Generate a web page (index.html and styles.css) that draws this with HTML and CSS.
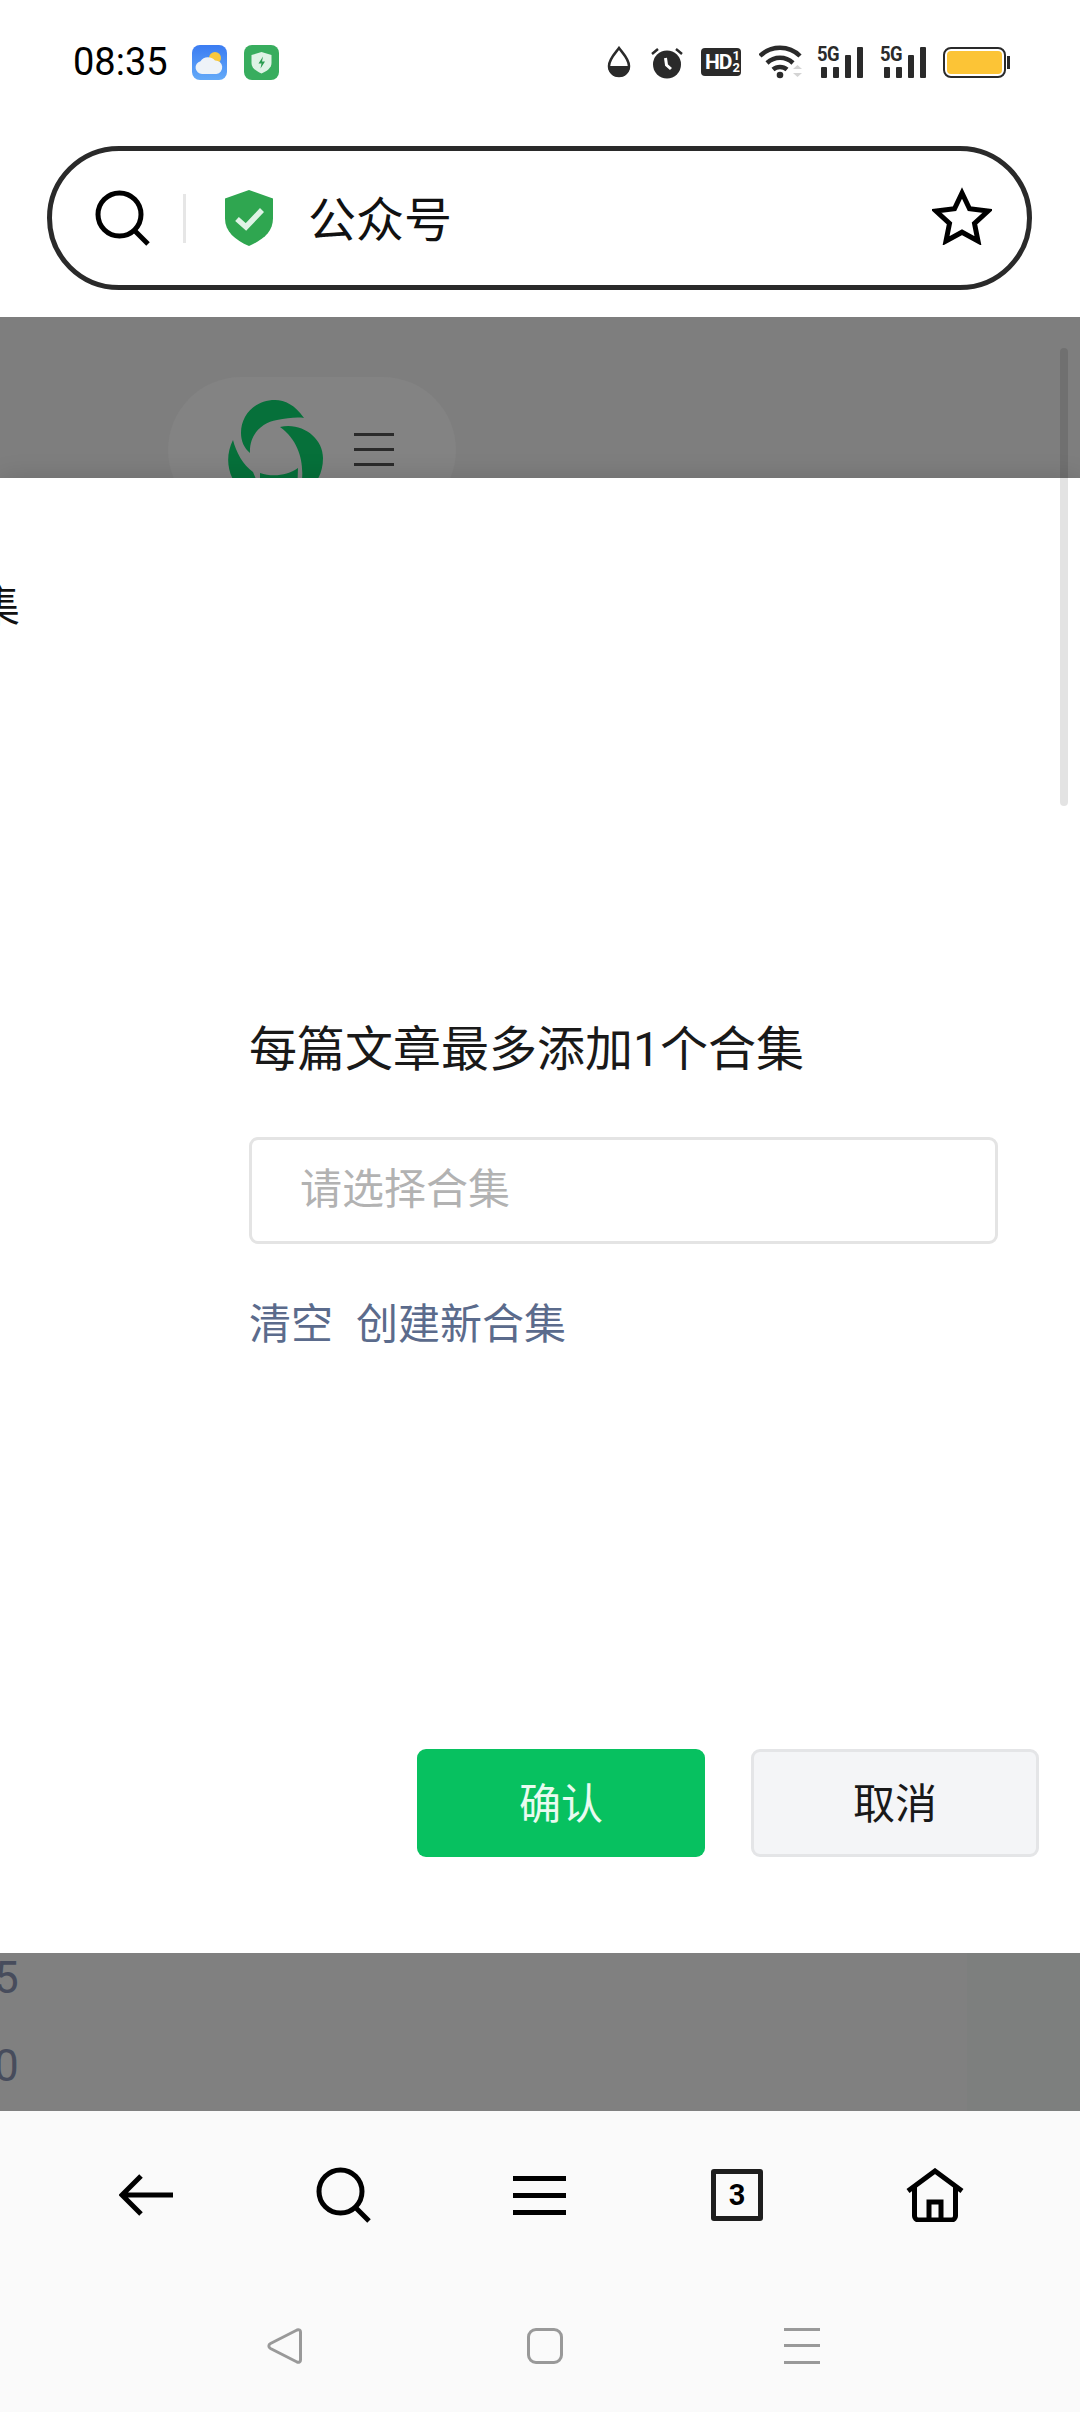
FILE: index.html
```html
<!DOCTYPE html>
<html lang="zh-CN">
<head>
    <meta charset="UTF-8">
    <meta name="viewport" content="width=device-width, initial-scale=1.0">
    <title>公众号</title>
    <link rel="stylesheet" href="styles.css">
</head>
<body>
    <div class="status-bar">
        <div class="status-left">
            <span class="time">08:35</span>
            <svg class="app-icon weather" viewBox="0 0 35 35">
                <defs>
                    <linearGradient id="sky" x1="0" y1="0" x2="0" y2="1">
                        <stop offset="0" stop-color="#3b7cf2"/>
                        <stop offset="1" stop-color="#64aaf8"/>
                    </linearGradient>
                </defs>
                <rect width="35" height="35" rx="8" fill="url(#sky)"/>
                <circle cx="23" cy="13" r="6" fill="#f8c83e"/>
                <path d="M10 29a6.500 6.500 0 0 1-1.500-12.800A9 9 0 0 1 23 15.500a6.800 6.800 0 0 1 1.500 13.500z" fill="#eef3f8"/>
            </svg>
            <svg class="app-icon" viewBox="0 0 35 35">
                <rect width="35" height="35" rx="8" fill="#38ad5e"/>
                <path d="M17.500 7l10 3v8c0 5-4.500 8-10 10.500-5.500-2.500-10-5.500-10-10.500v-8z" fill="#dff3e6"/>
                <path d="M19 11.500l-4.500 7h3l-1 5 4.500-7h-3z" fill="#2b9c50"/>
            </svg>
        </div>
        <div class="status-right">
            <svg class="st-drop" viewBox="0 0 24 32">
                <path d="M12 2c4 5.500 10 11 10 18a10 10 0 0 1-20 0c0-7 6-12.500 10-18z" fill="none" stroke="#2a2a2a" stroke-width="2.500"/>
                <path d="M1 20h22a11 11 0 0 1-22 0z" fill="#2a2a2a"/>
            </svg>
            <svg class="st-alarm" viewBox="0 0 32 33">
                <circle cx="16" cy="18.500" r="14" fill="#2a2a2a"/>
                <path d="M1 8l6-5M31 8l-6-5" stroke="#2a2a2a" stroke-width="2.500" fill="none"/>
                <path d="M14.500 12l1 7 4.500 4" stroke="#fff" stroke-width="3" fill="none"/>
            </svg>
            <div class="st-hd"><span class="hd-main">HD</span><span class="hd-frac"><i>1</i><i>2</i></span></div>
            <svg class="st-wifi" viewBox="0 0 43 34">
                <path d="M1 11c11-11 29-11 40 0M8 18c7.500-7 18.500-7 26 0M14 24.500c4-3.500 10-3.500 14 0" fill="none" stroke="#2a2a2a" stroke-width="4.500"/>
                <circle cx="21" cy="30" r="3.300" fill="#2a2a2a"/>
                <path d="M34 24l4.500-4 4.500 4zM34 28h9l-4.500 4z" fill="#d4d4d4"/>
            </svg>
            <div class="st-signal">
                <span class="five-g">5G</span>
                <div class="bars">
                    <i class="b1"></i><i class="b2"></i><i class="b3"></i><i class="b4"></i>
                </div>
            </div>
            <div class="st-signal">
                <span class="five-g">5G</span>
                <div class="bars">
                    <i class="b1"></i><i class="b2"></i><i class="b3"></i><i class="b4"></i>
                </div>
            </div>
            <div class="st-battery">
                <div class="battery-body"><div class="battery-fill"></div></div>
                <div class="battery-nub"></div>
            </div>
        </div>
    </div>

    <div class="address-wrap">
        <div class="address-bar">
            <svg class="addr-search" viewBox="0 0 56 56">
                <circle cx="24.500" cy="24.500" r="21.500" fill="none" stroke="#000" stroke-width="5"/>
                <path d="M39 40l14 14" stroke="#000" stroke-width="5" fill="none"/>
            </svg>
            <span class="addr-divider"></span>
            <svg class="addr-shield" viewBox="0 0 50 56">
                <path d="M25 0l24 8.500v20c0 13-10 21.500-24 27.500C11 50 1 41.500 1 28.500v-20z" fill="#2fa650"/>
                <path d="M13 29l9 8 16-17" fill="none" stroke="#dff3e6" stroke-width="5.500"/>
            </svg>
            <span class="addr-text">公众号</span>
            <svg class="addr-star" viewBox="0 0 60 58">
                <path d="M30 6l7.500 15.800 18.500 2.200-13.500 12.500 3.500 17.500-16-8.800-16 8.800 3.500-17.500L4 24l18.500-2.200z" fill="none" stroke="#000" stroke-width="5" stroke-linejoin="miter"/>
            </svg>
        </div>
    </div>

    <div class="page">
        <div class="page-top">
            <div class="logo-pill">
                <svg class="logo" viewBox="0 0 96 96">
                    <path d="M77 18C68 5 58 0 48 0 28 0 14 15 14 33c0 8 3 15 9 20-1-18 12-31 27-33 10-2 20-3 27-2z" fill="#06703a"/>
                    <path d="M53 27c22-5 43 11 43 31 0 17-8 30-24 38 6-21 6-51-19-69z" fill="#06703a"/>
                    <path d="M6 40c-9 18-6 40 14 56h16L26 72C16 65 9 52 6 40z" fill="#06703a"/>
                    <path d="M33 73c12 4 27 3 38-5l-1 28H33z" fill="#06703a"/>
                </svg>
                <div class="pill-menu"><i></i><i></i><i></i></div>
            </div>
        </div>

        <div class="modal">
            <div class="cut-label">集</div>
            <div class="form-block">
                <div class="form-title">每篇文章最多添加1个合集</div>
                <div class="select-box">请选择合集</div>
                <div class="form-links">
                    <a href="#">清空</a>
                    <a href="#">创建新合集</a>
                </div>
            </div>
            <div class="modal-actions">
                <button class="btn btn-ok">确认</button>
                <button class="btn btn-cancel">取消</button>
            </div>
        </div>

        <div class="page-bottom">
            <div class="cut-num first">5</div>
            <div class="cut-num">0</div>
            <div class="bottom-side"></div>
        </div>

        <div class="scroll-thumb"></div>
    </div>

    <div class="bottom-bar">
        <div class="browser-nav">
            <svg class="nav-back" viewBox="0 0 54 44">
                <path d="M2 22h52M22 3L3 22l19 19" fill="none" stroke="#000" stroke-width="5"/>
            </svg>
            <svg class="nav-search" viewBox="0 0 56 56">
                <circle cx="24.500" cy="24.500" r="21.500" fill="none" stroke="#000" stroke-width="5"/>
                <path d="M39 40l14 14" stroke="#000" stroke-width="5" fill="none"/>
            </svg>
            <div class="nav-menu"><i></i><i></i><i></i></div>
            <div class="nav-tabs">3</div>
            <svg class="nav-home" viewBox="0 0 58 54">
                <path d="M2 23L29 3l27 20" fill="none" stroke="#000" stroke-width="5"/>
                <path d="M8.500 19v29a4 4 0 0 0 4 4h33a4 4 0 0 0 4-4V19" fill="none" stroke="#000" stroke-width="5"/>
                <path d="M23 52V34h12v18" fill="none" stroke="#000" stroke-width="5"/>
            </svg>
        </div>
        <div class="system-nav">
            <svg class="sys-back" viewBox="0 0 36 36">
                <path d="M3.500 15.500L30 2c2-.8 3.500.3 3.500 2v28c0 1.700-1.500 2.800-3.500 2L3.500 20.500c-2.200-1.200-2.200-3.800 0-5z" fill="none" stroke="#999" stroke-width="3"/>
            </svg>
            <div class="sys-home"></div>
            <div class="sys-menu"><i></i><i></i><i></i></div>
        </div>
    </div>
</body>
</html>
```

FILE: styles.css
```css
* {
    margin: 0;
    padding: 0;
    box-sizing: border-box;
    font-family: 'Roboto', 'Noto Sans CJK SC', sans-serif;
}

body {
    width: 1080px;
    height: 2412px;
    overflow: hidden;
    display: flex;
    flex-direction: column;
    background-color: white;
}

svg {
    display: block;
    flex-shrink: 0;
}

/* status bar */
.status-bar {
    height: 124px;
    flex-shrink: 0;
    display: flex;
    justify-content: space-between;
    padding: 44px 70px 0 73px;
}

.status-left {
    height: 36px;
    display: flex;
    align-items: center;
}

.time {
    font-size: 38px;
    line-height: 36px;
    color: black;
    width: 119px;
}

.app-icon {
    width: 35px;
    height: 35px;
    margin-right: 17px;
}

.status-right {
    height: 36px;
    display: flex;
    align-items: center;
}

.st-drop {
    width: 24px;
    height: 32px;
    margin-right: 20px;
}

.st-alarm {
    width: 32px;
    height: 33px;
    margin-right: 18px;
}

.st-hd {
    width: 40px;
    height: 28px;
    margin-right: 18px;
    background-color: #2a2a2a;
    border-radius: 4px;
    color: white;
    display: flex;
    align-items: center;
    padding-left: 4px;
}

.hd-main {
    font-size: 21px;
    font-weight: 700;
    letter-spacing: -1px;
}

.hd-frac {
    display: flex;
    flex-direction: column;
    margin-left: 1px;
}

.hd-frac i {
    font-style: normal;
    font-size: 13px;
    line-height: 12px;
    font-weight: 700;
}

.st-wifi {
    width: 43px;
    height: 34px;
    margin-right: 15px;
}

.st-signal {
    position: relative;
    width: 46px;
    height: 31px;
    margin-right: 17px;
}

.five-g {
    position: absolute;
    left: 0;
    top: -3px;
    font-size: 20px;
    line-height: 20px;
    font-weight: 700;
    letter-spacing: -0.5px;
    color: #2a2a2a;
    transform: scaleX(0.92);
    transform-origin: left center;
}

.bars {
    height: 31px;
    display: flex;
    align-items: flex-end;
    gap: 6px;
    padding-left: 4px;
}

.bars i {
    display: block;
    width: 6px;
    background-color: #2a2a2a;
    border-radius: 1px;
}

.bars .b1 { height: 11px; }
.bars .b2 { height: 11px; }
.bars .b3 { height: 23px; }
.bars .b4 { height: 31px; }

.st-battery {
    display: flex;
    align-items: center;
}

.battery-body {
    width: 63px;
    height: 31px;
    border: 2.500px solid #2a2a2a;
    border-radius: 8px;
    padding: 2px;
}

.battery-fill {
    height: 100%;
    background-color: #fcc436;
    border-radius: 4px;
}

.battery-nub {
    width: 3px;
    height: 13px;
    margin-left: 1px;
    background-color: #2a2a2a;
}

/* address bar */
.address-wrap {
    height: 193px;
    flex-shrink: 0;
    padding: 22px 48px 27px 47px;
}

.address-bar {
    height: 144px;
    border: 5px solid #2a2a2a;
    border-radius: 72px;
    display: flex;
    align-items: center;
    padding: 0 35px 0 43px;
    background-color: white;
}

.addr-search {
    width: 56px;
    height: 56px;
}

.addr-divider {
    width: 3px;
    height: 49px;
    margin-left: 32px;
    background-color: #e6e6e6;
}

.addr-shield {
    width: 50px;
    height: 56px;
    margin-left: 38px;
}

.addr-text {
    font-size: 48px;
    color: #111;
    margin: 0 0 5px 34px;
    flex: 1;
}

.addr-star {
    width: 60px;
    height: 58px;
    margin-bottom: 4px;
}

/* page behind the dialog */
.page {
    position: relative;
    height: 1794px;
    flex-shrink: 0;
    display: flex;
    flex-direction: column;
    background-color: #7f7f7f;
}

.page-top {
    height: 161px;
    flex-shrink: 0;
    padding: 60px 0 0 168px;
    overflow: hidden;
    background-color: #7e7e7e;
}

.logo-pill {
    width: 288px;
    height: 146px;
    border-radius: 73px;
    background-color: #838383;
    display: flex;
    padding: 23px 0 0 59px;
}

.logo {
    width: 96px;
    height: 96px;
}

.pill-menu {
    margin: 33px 0 0 31px;
    display: flex;
    flex-direction: column;
    gap: 12px;
}

.pill-menu i {
    display: block;
    width: 40px;
    height: 3px;
    background-color: #2a2a2a;
}

/* dialog */
.modal {
    position: relative;
    height: 1475px;
    flex-shrink: 0;
    background-color: white;
    box-shadow: 0 0 24px rgba(0, 0, 0, 0.14);
    display: flex;
    flex-direction: column;
    overflow: hidden;
}

.cut-label {
    font-size: 44px;
    line-height: 60px;
    color: #111;
    margin: 99px 0 0 -24px;
}

.form-block {
    margin: 383px 0 0 249px;
    width: 749px;
}

.form-title {
    font-size: 48px;
    line-height: 60px;
    color: #191919;
}

.select-box {
    height: 107px;
    margin-top: 57px;
    border: 3px solid #e4e4e4;
    border-radius: 9px;
    padding-left: 48px;
    font-size: 42px;
    line-height: 100px;
    color: #b2b2b2;
}

.form-links {
    margin-top: 56px;
    display: flex;
    gap: 23px;
}

.form-links a {
    font-size: 42px;
    line-height: 50px;
    color: #5b6b8c;
    text-decoration: none;
}

.modal-actions {
    margin-top: auto;
    margin-bottom: 96px;
    padding-right: 41px;
    display: flex;
    justify-content: flex-end;
    gap: 46px;
}

.btn {
    width: 288px;
    height: 108px;
    padding-bottom: 6px;
    border-radius: 9px;
    font-size: 42px;
    font-family: 'Noto Sans CJK SC', sans-serif;
}

.btn-ok {
    background-color: #07c160;
    border: none;
    color: #e8fbf0;
}

.btn-cancel {
    background-color: #f4f5f7;
    border: 3px solid #e4e5e7;
    color: #191919;
}

/* under the dialog */
.page-bottom {
    position: relative;
    height: 158px;
    flex-shrink: 0;
    overflow: hidden;
    background-color: #808080;
}

.cut-num {
    font-size: 44px;
    line-height: 88px;
    color: #474c5c;
    margin-left: -6px;
}

.cut-num.first {
    margin-top: -19px;
}

.bottom-side {
    position: absolute;
    top: 0;
    right: 0;
    width: 113px;
    height: 100%;
    background-color: #7d7f7e;
}

.scroll-thumb {
    position: absolute;
    top: 31px;
    right: 12px;
    width: 8px;
    height: 458px;
    border-radius: 4px;
    background-color: rgba(0, 0, 0, 0.11);
}

/* bottom bars */
.bottom-bar {
    height: 301px;
    flex-shrink: 0;
    background-color: #fafafa;
    display: flex;
    flex-direction: column;
}

.browser-nav {
    height: 168px;
    padding: 0 0 0 119px;
    display: flex;
    align-items: center;
}

.nav-back {
    width: 54px;
    height: 44px;
}

.nav-search {
    width: 56px;
    height: 56px;
    margin-left: 143px;
}

.nav-menu {
    margin-left: 141px;
    width: 53px;
    display: flex;
    flex-direction: column;
    gap: 12px;
}

.nav-menu i {
    display: block;
    height: 5px;
    background-color: black;
}

.nav-tabs {
    width: 52px;
    height: 52px;
    margin-left: 145px;
    border: 5px solid #1e1e1e;
    border-radius: 3px;
    font-size: 29px;
    font-weight: 700;
    line-height: 42px;
    text-align: center;
    color: black;
}

.nav-home {
    width: 58px;
    height: 54px;
    margin-left: 143px;
}

.system-nav {
    flex: 1;
    padding: 0 0 0 267px;
    display: flex;
    align-items: center;
}

.sys-back {
    width: 36px;
    height: 36px;
}

.sys-home {
    width: 36px;
    height: 36px;
    margin-left: 224px;
    border: 3px solid #999;
    border-radius: 9px;
}

.sys-menu {
    width: 36px;
    margin-left: 221px;
    display: flex;
    flex-direction: column;
    gap: 13.500px;
}

.sys-menu i {
    display: block;
    height: 3px;
    background-color: #999;
}
```
